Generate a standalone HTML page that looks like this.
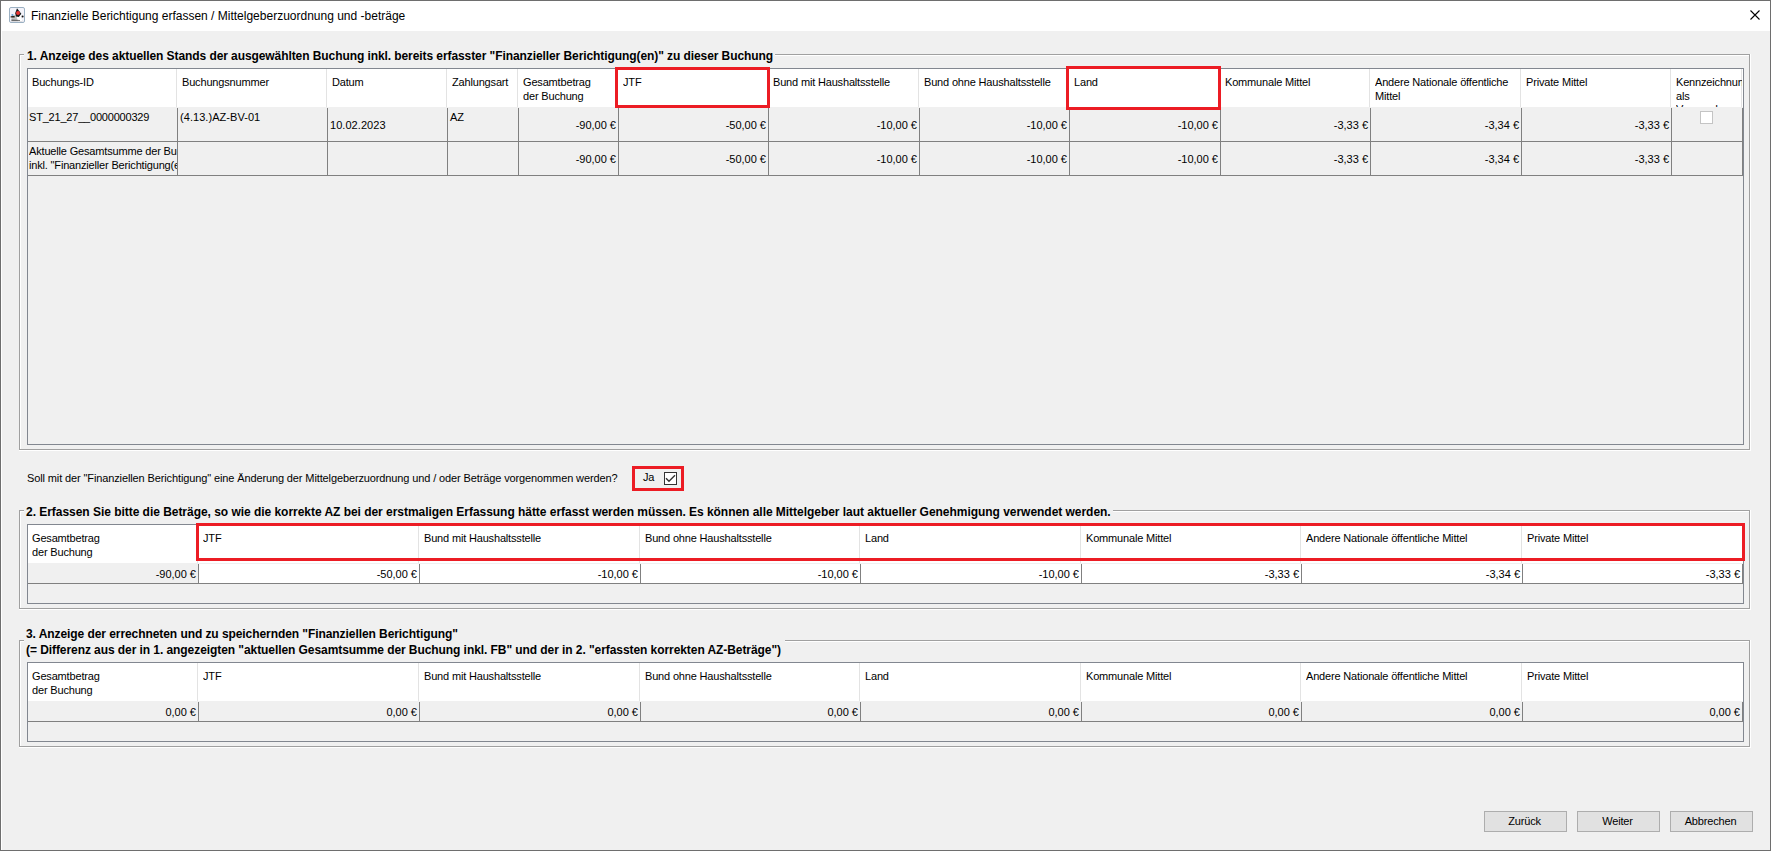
<!DOCTYPE html>
<html><head><meta charset="utf-8"><title>Finanzielle Berichtigung</title>
<style>
html,body{margin:0;padding:0;width:1771px;height:851px;overflow:hidden;background:#f0f0f0;}
.a{position:absolute;}
.t{font-family:"Liberation Sans",sans-serif;font-size:11px;line-height:14px;color:#000;letter-spacing:-0.17px;white-space:nowrap;}
.hd{line-height:13.6px;}
.r{text-align:right;}
.b{font-family:"Liberation Sans",sans-serif;font-size:12px;font-weight:bold;line-height:14px;color:#000;white-space:nowrap;letter-spacing:-0.08px;}
.tt{font-family:"Liberation Sans",sans-serif;font-size:12px;line-height:14px;color:#000;white-space:nowrap;}
.btn{box-sizing:border-box;border:1px solid #adadad;background:#e1e1e1;font-family:"Liberation Sans",sans-serif;font-size:11px;line-height:19px;text-align:center;color:#000;letter-spacing:-0.17px;padding-right:2px;}
</style></head><body>
<div class="a" style="left:0px;top:0px;width:1771px;height:851px;background:#f0f0f0;"></div>
<div class="a" style="left:1px;top:1px;width:1769px;height:30px;background:#ffffff;"></div>
<div class="a" style="left:0px;top:0px;width:1771px;height:1px;background:#6e6e6e;"></div>
<div class="a" style="left:0px;top:0px;width:1px;height:851px;background:#6e6e6e;"></div>
<div class="a" style="left:1770px;top:0px;width:1px;height:851px;background:#6e6e6e;"></div>
<div class="a" style="left:0px;top:850px;width:1771px;height:1px;background:#6e6e6e;"></div>
<div class="a" style="left:1px;top:31px;width:1px;height:819px;background:#ffffff;"></div>
<svg class="a" style="left:9px;top:7px" width="16" height="16" viewBox="0 0 16 16">
<rect x="0.5" y="0.5" width="15" height="15" rx="1.5" fill="#f3f3fa" stroke="#9bb0c2"/>
<path d="M3.5 9 L11.8 6.8 L13.5 14.5 L2.2 14.5 L2.5 11 Z" fill="#c4c4c4"/>
<path d="M7.5 9.5 L12 7.5 L13.3 14 L9 14.3 Z" fill="#ffffff"/>
<path d="M8 1.3 L12.3 6.8 L9.8 10 L7 9.6 L6.2 6.2 Z" fill="#111818"/>
<circle cx="9" cy="6" r="2" fill="#ea3434"/>
<path d="M1.6 9.3 L5.6 8.7 L5.7 10.4 L1.6 10.6 Z" fill="#2a2418"/>
<circle cx="3.4" cy="8" r="1.1" fill="#6aa5d8"/>
<circle cx="13.6" cy="9.5" r="1" fill="#111"/>
<path d="M2.5 12.6 L11 12.9 L11 14 L2.5 14 Z" fill="#444" opacity="0.7"/>
</svg>
<div class="a tt" style="left:31px;top:9px;">Finanzielle Berichtigung erfassen / Mittelgeberzuordnung und -beträge</div>
<svg class="a" style="left:1749px;top:9px" width="12" height="12" viewBox="0 0 12 12"><path d="M1.5 1.5 L10.5 10.5 M10.5 1.5 L1.5 10.5" stroke="#000" stroke-width="1.1" fill="none"/></svg>
<div class="a" style="left:19px;top:54px;width:1731px;height:1px;background:#a0a0a0;"></div>
<div class="a" style="left:19px;top:54px;width:1px;height:396px;background:#a0a0a0;"></div>
<div class="a" style="left:19px;top:449px;width:1731px;height:1px;background:#a0a0a0;"></div>
<div class="a" style="left:1749px;top:54px;width:1px;height:396px;background:#a0a0a0;"></div>
<div class="a" style="left:20px;top:55px;width:1729px;height:1px;background:#ffffff;"></div>
<div class="a" style="left:20px;top:55px;width:1px;height:394px;background:#ffffff;"></div>
<div class="a" style="left:19px;top:450px;width:1732px;height:1px;background:#ffffff;"></div>
<div class="a" style="left:1750px;top:54px;width:1px;height:397px;background:#ffffff;"></div>
<div class="a" style="left:24px;top:52px;width:751px;height:5px;background:#f0f0f0;"></div>
<div class="a b" style="left:27px;top:49px;">1. Anzeige des aktuellen Stands der ausgewählten Buchung inkl. bereits erfasster "Finanzieller Berichtigung(en)" zu dieser Buchung</div>
<div class="a" style="left:27px;top:68px;width:1717px;height:377px;border:1px solid #828790;box-sizing:border-box;"></div>
<div class="a" style="left:28px;top:69px;width:1715px;height:38px;background:#ffffff;"></div>
<div class="a" style="left:176px;top:69px;width:1px;height:38px;background:#e3e3e3;"></div>
<div class="a" style="left:326px;top:69px;width:1px;height:38px;background:#e3e3e3;"></div>
<div class="a" style="left:446px;top:69px;width:1px;height:38px;background:#e3e3e3;"></div>
<div class="a" style="left:517px;top:69px;width:1px;height:38px;background:#e3e3e3;"></div>
<div class="a" style="left:617px;top:69px;width:1px;height:38px;background:#e3e3e3;"></div>
<div class="a" style="left:767px;top:69px;width:1px;height:38px;background:#e3e3e3;"></div>
<div class="a" style="left:918px;top:69px;width:1px;height:38px;background:#e3e3e3;"></div>
<div class="a" style="left:1068px;top:69px;width:1px;height:38px;background:#e3e3e3;"></div>
<div class="a" style="left:1219px;top:69px;width:1px;height:38px;background:#e3e3e3;"></div>
<div class="a" style="left:1369px;top:69px;width:1px;height:38px;background:#e3e3e3;"></div>
<div class="a" style="left:1520px;top:69px;width:1px;height:38px;background:#e3e3e3;"></div>
<div class="a" style="left:1670px;top:69px;width:1px;height:38px;background:#e3e3e3;"></div>
<div class="a" style="left:1741px;top:69px;width:1px;height:38px;background:#e3e3e3;"></div>
<div class="a" style="left:177px;top:108px;width:1px;height:34px;background:#808080;"></div>
<div class="a" style="left:327px;top:108px;width:1px;height:34px;background:#808080;"></div>
<div class="a" style="left:447px;top:108px;width:1px;height:34px;background:#808080;"></div>
<div class="a" style="left:518px;top:108px;width:1px;height:34px;background:#808080;"></div>
<div class="a" style="left:618px;top:108px;width:1px;height:34px;background:#808080;"></div>
<div class="a" style="left:768px;top:108px;width:1px;height:34px;background:#808080;"></div>
<div class="a" style="left:919px;top:108px;width:1px;height:34px;background:#808080;"></div>
<div class="a" style="left:1069px;top:108px;width:1px;height:34px;background:#808080;"></div>
<div class="a" style="left:1220px;top:108px;width:1px;height:34px;background:#808080;"></div>
<div class="a" style="left:1370px;top:108px;width:1px;height:34px;background:#808080;"></div>
<div class="a" style="left:1521px;top:108px;width:1px;height:34px;background:#808080;"></div>
<div class="a" style="left:1671px;top:108px;width:1px;height:34px;background:#808080;"></div>
<div class="a" style="left:1742px;top:108px;width:1px;height:34px;background:#808080;"></div>
<div class="a" style="left:28px;top:141px;width:1715px;height:1px;background:#808080;"></div>
<div class="a" style="left:177px;top:142px;width:1px;height:34px;background:#808080;"></div>
<div class="a" style="left:327px;top:142px;width:1px;height:34px;background:#808080;"></div>
<div class="a" style="left:447px;top:142px;width:1px;height:34px;background:#808080;"></div>
<div class="a" style="left:518px;top:142px;width:1px;height:34px;background:#808080;"></div>
<div class="a" style="left:618px;top:142px;width:1px;height:34px;background:#808080;"></div>
<div class="a" style="left:768px;top:142px;width:1px;height:34px;background:#808080;"></div>
<div class="a" style="left:919px;top:142px;width:1px;height:34px;background:#808080;"></div>
<div class="a" style="left:1069px;top:142px;width:1px;height:34px;background:#808080;"></div>
<div class="a" style="left:1220px;top:142px;width:1px;height:34px;background:#808080;"></div>
<div class="a" style="left:1370px;top:142px;width:1px;height:34px;background:#808080;"></div>
<div class="a" style="left:1521px;top:142px;width:1px;height:34px;background:#808080;"></div>
<div class="a" style="left:1671px;top:142px;width:1px;height:34px;background:#808080;"></div>
<div class="a" style="left:1742px;top:142px;width:1px;height:34px;background:#808080;"></div>
<div class="a" style="left:28px;top:175px;width:1715px;height:1px;background:#808080;"></div>
<div class="a t hd" style="left:32px;top:76px;width:144px;height:31px;overflow:hidden;white-space:nowrap;">Buchungs-ID</div>
<div class="a t hd" style="left:182px;top:76px;width:144px;height:31px;overflow:hidden;white-space:nowrap;">Buchungsnummer</div>
<div class="a t hd" style="left:332px;top:76px;width:114px;height:31px;overflow:hidden;white-space:nowrap;">Datum</div>
<div class="a t hd" style="left:452px;top:76px;width:65px;height:31px;overflow:hidden;white-space:nowrap;">Zahlungsart</div>
<div class="a t hd" style="left:523px;top:76px;width:94px;height:31px;overflow:hidden;white-space:nowrap;">Gesamtbetrag<br>der Buchung</div>
<div class="a t hd" style="left:623px;top:76px;width:144px;height:31px;overflow:hidden;white-space:nowrap;">JTF</div>
<div class="a t hd" style="left:773px;top:76px;width:145px;height:31px;overflow:hidden;white-space:nowrap;">Bund mit Haushaltsstelle</div>
<div class="a t hd" style="left:924px;top:76px;width:144px;height:31px;overflow:hidden;white-space:nowrap;">Bund ohne Haushaltsstelle</div>
<div class="a t hd" style="left:1074px;top:76px;width:145px;height:31px;overflow:hidden;white-space:nowrap;">Land</div>
<div class="a t hd" style="left:1225px;top:76px;width:144px;height:31px;overflow:hidden;white-space:nowrap;">Kommunale Mittel</div>
<div class="a t hd" style="left:1375px;top:76px;width:145px;height:31px;overflow:hidden;white-space:nowrap;">Andere Nationale öffentliche<br>Mittel</div>
<div class="a t hd" style="left:1526px;top:76px;width:144px;height:31px;overflow:hidden;white-space:nowrap;">Private Mittel</div>
<div class="a t hd" style="left:1676px;top:76px;width:66px;height:31px;overflow:hidden;white-space:nowrap;">Kennzeichnung<br>als<br>Verwendungsnachweis</div>
<div class="a t" style="left:29px;top:110px;letter-spacing:-0.2px;">ST_21_27__0000000329</div>
<div class="a t" style="left:180px;top:110px;letter-spacing:0.05px;">(4.13.)AZ-BV-01</div>
<div class="a t" style="left:330px;top:118px;letter-spacing:0.05px;">10.02.2023</div>
<div class="a t" style="left:450px;top:110px;">AZ</div>
<div class="a t r" style="left:316px;width:300px;top:118px;letter-spacing:0;">-90,00 €</div>
<div class="a t r" style="left:466px;width:300px;top:118px;letter-spacing:0;">-50,00 €</div>
<div class="a t r" style="left:617px;width:300px;top:118px;letter-spacing:0;">-10,00 €</div>
<div class="a t r" style="left:767px;width:300px;top:118px;letter-spacing:0;">-10,00 €</div>
<div class="a t r" style="left:918px;width:300px;top:118px;letter-spacing:0;">-10,00 €</div>
<div class="a t r" style="left:1068px;width:300px;top:118px;letter-spacing:0;">-3,33 €</div>
<div class="a t r" style="left:1219px;width:300px;top:118px;letter-spacing:0;">-3,34 €</div>
<div class="a t r" style="left:1369px;width:300px;top:118px;letter-spacing:0;">-3,33 €</div>
<div class="a t r" style="left:316px;width:300px;top:152px;letter-spacing:0;">-90,00 €</div>
<div class="a t r" style="left:466px;width:300px;top:152px;letter-spacing:0;">-50,00 €</div>
<div class="a t r" style="left:617px;width:300px;top:152px;letter-spacing:0;">-10,00 €</div>
<div class="a t r" style="left:767px;width:300px;top:152px;letter-spacing:0;">-10,00 €</div>
<div class="a t r" style="left:918px;width:300px;top:152px;letter-spacing:0;">-10,00 €</div>
<div class="a t r" style="left:1068px;width:300px;top:152px;letter-spacing:0;">-3,33 €</div>
<div class="a t r" style="left:1219px;width:300px;top:152px;letter-spacing:0;">-3,34 €</div>
<div class="a t r" style="left:1369px;width:300px;top:152px;letter-spacing:0;">-3,33 €</div>
<div class="a t" style="left:29px;top:144px;width:148px;height:30px;overflow:hidden;white-space:nowrap;line-height:14px;">Aktuelle Gesamtsumme der Buchung<br>inkl. "Finanzieller Berichtigung(en)"</div>
<div class="a" style="left:1700px;top:111px;width:13px;height:13px;background:#ffffff;border:1px solid #c4c4c4;box-sizing:border-box;"></div>
<div class="a" style="left:615px;top:67px;width:155px;height:41px;border:3px solid #ec1c24;box-sizing:border-box;"></div>
<div class="a" style="left:1066px;top:66px;width:155px;height:44px;border:3px solid #ec1c24;box-sizing:border-box;"></div>
<div class="a t" style="left:27px;top:471px;letter-spacing:-0.12px;">Soll mit der "Finanziellen Berichtigung" eine Änderung der Mittelgeberzuordnung und / oder Beträge vorgenommen werden?</div>
<div class="a t" style="left:643px;top:470px;">Ja</div>
<div class="a" style="left:664px;top:472px;width:13px;height:13px;background:#ffffff;border:1px solid #333;box-sizing:border-box;"></div>
<svg class="a" style="left:664px;top:472px" width="13" height="13" viewBox="0 0 13 13"><path d="M2 6.2 L5 9.3 L11 3.2" stroke="#333" stroke-width="1.4" fill="none"/></svg>
<div class="a" style="left:632px;top:466px;width:52px;height:25px;border:3px solid #ec1c24;box-sizing:border-box;"></div>
<div class="a" style="left:19px;top:510px;width:1731px;height:1px;background:#a0a0a0;"></div>
<div class="a" style="left:19px;top:510px;width:1px;height:99px;background:#a0a0a0;"></div>
<div class="a" style="left:19px;top:608px;width:1731px;height:1px;background:#a0a0a0;"></div>
<div class="a" style="left:1749px;top:510px;width:1px;height:99px;background:#a0a0a0;"></div>
<div class="a" style="left:20px;top:511px;width:1729px;height:1px;background:#ffffff;"></div>
<div class="a" style="left:20px;top:511px;width:1px;height:97px;background:#ffffff;"></div>
<div class="a" style="left:19px;top:609px;width:1732px;height:1px;background:#ffffff;"></div>
<div class="a" style="left:1750px;top:510px;width:1px;height:100px;background:#ffffff;"></div>
<div class="a" style="left:24px;top:508px;width:1089px;height:5px;background:#f0f0f0;"></div>
<div class="a b" style="left:26px;top:505px;letter-spacing:-0.035px;">2. Erfassen Sie bitte die Beträge, so wie die korrekte AZ bei der erstmaligen Erfassung hätte erfasst werden müssen. Es können alle Mittelgeber laut aktueller Genehmigung verwendet werden.</div>
<div class="a" style="left:27px;top:524px;width:1717px;height:80px;border:1px solid #828790;box-sizing:border-box;"></div>
<div class="a" style="left:28px;top:525px;width:1715px;height:38px;background:#ffffff;"></div>
<div class="a" style="left:197px;top:525px;width:1px;height:38px;background:#e3e3e3;"></div>
<div class="a" style="left:418px;top:525px;width:1px;height:38px;background:#e3e3e3;"></div>
<div class="a" style="left:639px;top:525px;width:1px;height:38px;background:#e3e3e3;"></div>
<div class="a" style="left:859px;top:525px;width:1px;height:38px;background:#e3e3e3;"></div>
<div class="a" style="left:1080px;top:525px;width:1px;height:38px;background:#e3e3e3;"></div>
<div class="a" style="left:1300px;top:525px;width:1px;height:38px;background:#e3e3e3;"></div>
<div class="a" style="left:1521px;top:525px;width:1px;height:38px;background:#e3e3e3;"></div>
<div class="a" style="left:199px;top:564px;width:1543px;height:19px;background:#ffffff;"></div>
<div class="a" style="left:198px;top:564px;width:1px;height:20px;background:#808080;"></div>
<div class="a" style="left:419px;top:564px;width:1px;height:20px;background:#808080;"></div>
<div class="a" style="left:640px;top:564px;width:1px;height:20px;background:#808080;"></div>
<div class="a" style="left:860px;top:564px;width:1px;height:20px;background:#808080;"></div>
<div class="a" style="left:1081px;top:564px;width:1px;height:20px;background:#808080;"></div>
<div class="a" style="left:1301px;top:564px;width:1px;height:20px;background:#808080;"></div>
<div class="a" style="left:1522px;top:564px;width:1px;height:20px;background:#808080;"></div>
<div class="a" style="left:1742px;top:564px;width:1px;height:20px;background:#808080;"></div>
<div class="a" style="left:28px;top:583px;width:1715px;height:1px;background:#808080;"></div>
<div class="a t hd" style="left:32px;top:532px;width:165px;height:31px;overflow:hidden;white-space:nowrap;">Gesamtbetrag<br>der Buchung</div>
<div class="a t hd" style="left:203px;top:532px;width:215px;height:31px;overflow:hidden;white-space:nowrap;">JTF</div>
<div class="a t hd" style="left:424px;top:532px;width:215px;height:31px;overflow:hidden;white-space:nowrap;">Bund mit Haushaltsstelle</div>
<div class="a t hd" style="left:645px;top:532px;width:214px;height:31px;overflow:hidden;white-space:nowrap;">Bund ohne Haushaltsstelle</div>
<div class="a t hd" style="left:865px;top:532px;width:215px;height:31px;overflow:hidden;white-space:nowrap;">Land</div>
<div class="a t hd" style="left:1086px;top:532px;width:214px;height:31px;overflow:hidden;white-space:nowrap;">Kommunale Mittel</div>
<div class="a t hd" style="left:1306px;top:532px;width:215px;height:31px;overflow:hidden;white-space:nowrap;">Andere Nationale öffentliche Mittel</div>
<div class="a t hd" style="left:1527px;top:532px;width:214px;height:31px;overflow:hidden;white-space:nowrap;">Private Mittel</div>
<div class="a t r" style="left:-104px;width:300px;top:567px;letter-spacing:0;">-90,00 €</div>
<div class="a t r" style="left:117px;width:300px;top:567px;letter-spacing:0;">-50,00 €</div>
<div class="a t r" style="left:338px;width:300px;top:567px;letter-spacing:0;">-10,00 €</div>
<div class="a t r" style="left:558px;width:300px;top:567px;letter-spacing:0;">-10,00 €</div>
<div class="a t r" style="left:779px;width:300px;top:567px;letter-spacing:0;">-10,00 €</div>
<div class="a t r" style="left:999px;width:300px;top:567px;letter-spacing:0;">-3,33 €</div>
<div class="a t r" style="left:1220px;width:300px;top:567px;letter-spacing:0;">-3,34 €</div>
<div class="a t r" style="left:1440px;width:300px;top:567px;letter-spacing:0;">-3,33 €</div>
<div class="a" style="left:196px;top:523px;width:1549px;height:38px;border:3px solid #ec1c24;box-sizing:border-box;"></div>
<div class="a" style="left:19px;top:640px;width:1731px;height:1px;background:#a0a0a0;"></div>
<div class="a" style="left:19px;top:640px;width:1px;height:107px;background:#a0a0a0;"></div>
<div class="a" style="left:19px;top:746px;width:1731px;height:1px;background:#a0a0a0;"></div>
<div class="a" style="left:1749px;top:640px;width:1px;height:107px;background:#a0a0a0;"></div>
<div class="a" style="left:20px;top:641px;width:1729px;height:1px;background:#ffffff;"></div>
<div class="a" style="left:20px;top:641px;width:1px;height:105px;background:#ffffff;"></div>
<div class="a" style="left:19px;top:747px;width:1732px;height:1px;background:#ffffff;"></div>
<div class="a" style="left:1750px;top:640px;width:1px;height:108px;background:#ffffff;"></div>
<div class="a" style="left:24px;top:638px;width:761px;height:5px;background:#f0f0f0;"></div>
<div class="a b" style="left:26px;top:626px;line-height:16px;letter-spacing:-0.07px;">3. Anzeige der errechneten und zu speichernden "Finanziellen Berichtigung"<br>(= Differenz aus der in 1. angezeigten "aktuellen Gesamtsumme der Buchung inkl. FB" und der in 2. "erfassten korrekten AZ-Beträge")</div>
<div class="a" style="left:27px;top:662px;width:1717px;height:80px;border:1px solid #828790;box-sizing:border-box;"></div>
<div class="a" style="left:28px;top:663px;width:1715px;height:38px;background:#ffffff;"></div>
<div class="a" style="left:197px;top:663px;width:1px;height:38px;background:#e3e3e3;"></div>
<div class="a" style="left:418px;top:663px;width:1px;height:38px;background:#e3e3e3;"></div>
<div class="a" style="left:639px;top:663px;width:1px;height:38px;background:#e3e3e3;"></div>
<div class="a" style="left:859px;top:663px;width:1px;height:38px;background:#e3e3e3;"></div>
<div class="a" style="left:1080px;top:663px;width:1px;height:38px;background:#e3e3e3;"></div>
<div class="a" style="left:1300px;top:663px;width:1px;height:38px;background:#e3e3e3;"></div>
<div class="a" style="left:1521px;top:663px;width:1px;height:38px;background:#e3e3e3;"></div>
<div class="a" style="left:198px;top:702px;width:1px;height:20px;background:#808080;"></div>
<div class="a" style="left:419px;top:702px;width:1px;height:20px;background:#808080;"></div>
<div class="a" style="left:640px;top:702px;width:1px;height:20px;background:#808080;"></div>
<div class="a" style="left:860px;top:702px;width:1px;height:20px;background:#808080;"></div>
<div class="a" style="left:1081px;top:702px;width:1px;height:20px;background:#808080;"></div>
<div class="a" style="left:1301px;top:702px;width:1px;height:20px;background:#808080;"></div>
<div class="a" style="left:1522px;top:702px;width:1px;height:20px;background:#808080;"></div>
<div class="a" style="left:1742px;top:702px;width:1px;height:20px;background:#808080;"></div>
<div class="a" style="left:28px;top:721px;width:1715px;height:1px;background:#808080;"></div>
<div class="a t hd" style="left:32px;top:670px;width:165px;height:31px;overflow:hidden;white-space:nowrap;">Gesamtbetrag<br>der Buchung</div>
<div class="a t hd" style="left:203px;top:670px;width:215px;height:31px;overflow:hidden;white-space:nowrap;">JTF</div>
<div class="a t hd" style="left:424px;top:670px;width:215px;height:31px;overflow:hidden;white-space:nowrap;">Bund mit Haushaltsstelle</div>
<div class="a t hd" style="left:645px;top:670px;width:214px;height:31px;overflow:hidden;white-space:nowrap;">Bund ohne Haushaltsstelle</div>
<div class="a t hd" style="left:865px;top:670px;width:215px;height:31px;overflow:hidden;white-space:nowrap;">Land</div>
<div class="a t hd" style="left:1086px;top:670px;width:214px;height:31px;overflow:hidden;white-space:nowrap;">Kommunale Mittel</div>
<div class="a t hd" style="left:1306px;top:670px;width:215px;height:31px;overflow:hidden;white-space:nowrap;">Andere Nationale öffentliche Mittel</div>
<div class="a t hd" style="left:1527px;top:670px;width:214px;height:31px;overflow:hidden;white-space:nowrap;">Private Mittel</div>
<div class="a t r" style="left:-104px;width:300px;top:705px;letter-spacing:0;">0,00 €</div>
<div class="a t r" style="left:117px;width:300px;top:705px;letter-spacing:0;">0,00 €</div>
<div class="a t r" style="left:338px;width:300px;top:705px;letter-spacing:0;">0,00 €</div>
<div class="a t r" style="left:558px;width:300px;top:705px;letter-spacing:0;">0,00 €</div>
<div class="a t r" style="left:779px;width:300px;top:705px;letter-spacing:0;">0,00 €</div>
<div class="a t r" style="left:999px;width:300px;top:705px;letter-spacing:0;">0,00 €</div>
<div class="a t r" style="left:1220px;width:300px;top:705px;letter-spacing:0;">0,00 €</div>
<div class="a t r" style="left:1440px;width:300px;top:705px;letter-spacing:0;">0,00 €</div>
<div class="a btn" style="left:1484px;top:811px;width:83px;height:21px;">Zurück</div>
<div class="a btn" style="left:1577px;top:811px;width:83px;height:21px;">Weiter</div>
<div class="a btn" style="left:1670px;top:811px;width:83px;height:21px;">Abbrechen</div>
</body></html>
